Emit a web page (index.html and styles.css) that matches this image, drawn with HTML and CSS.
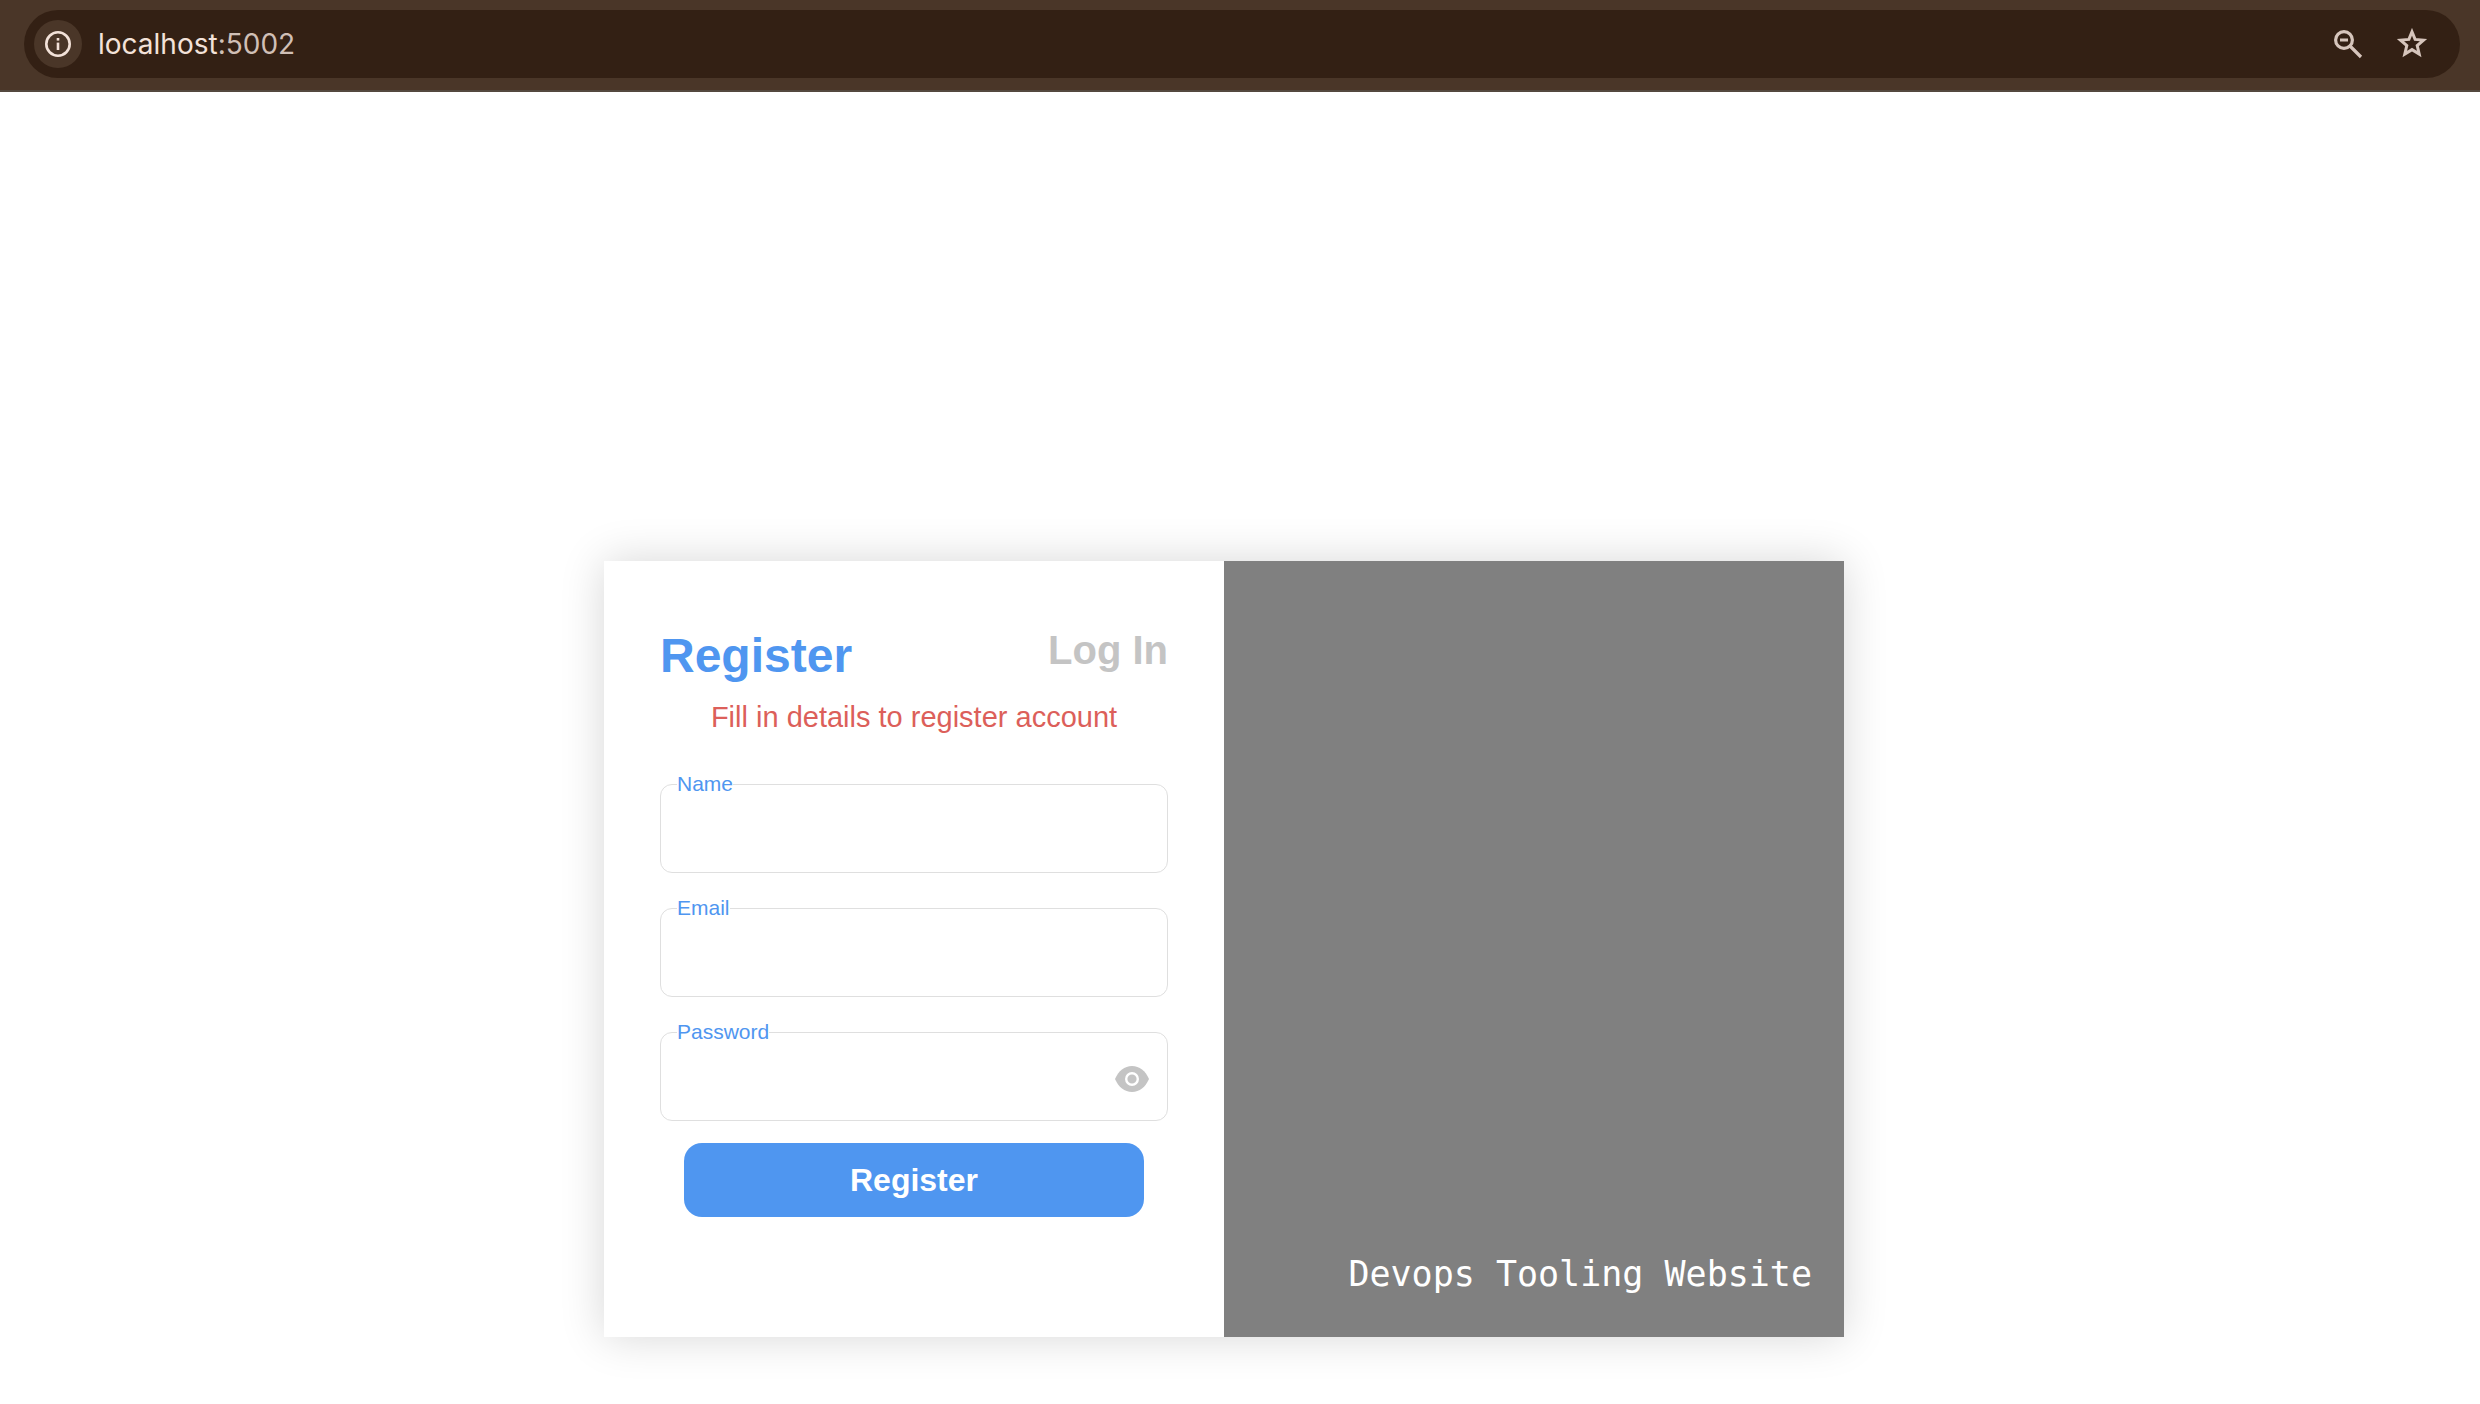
FILE: index.html
```html
<!DOCTYPE html>
<html lang="en">
<head>
  <meta charset="utf-8">
  <meta name="viewport" content="width=device-width, initial-scale=1">
  <title>Devops Tooling Website</title>
  <link rel="stylesheet" href="styles.css">
</head>
<body>
  <header class="toolbar">
    <div class="address">
      <button class="icon-button site-info" type="button" aria-label="Site information">
        <svg width="28" height="28" viewBox="0 0 28 28" fill="none" stroke="currentColor">
          <circle cx="14" cy="14" r="11.7" stroke-width="2.6"/>
          <path d="M14 12.6V20" stroke-width="2.6"/>
          <path d="M14 8V10.6" stroke-width="2.6"/>
        </svg>
      </button>
      <p class="url">localhost<span class="port">:5002</span></p>
      <div class="actions">
        <button class="icon-button" type="button" aria-label="Zoom out">
          <svg width="32" height="32" viewBox="0 0 32 32" fill="none" stroke="currentColor" stroke-width="3.2">
            <circle cx="12" cy="12" r="8.4"/>
            <path d="M18 18L29 29M8 12H16"/>
          </svg>
        </button>
        <button class="icon-button" type="button" aria-label="Bookmark this page">
          <svg width="32" height="32" viewBox="0 0 32 32" fill="none" stroke="currentColor" stroke-width="3">
            <path d="M16 3.800L19.100 11.400L27.500 12.100L21.200 17.600L23.200 26L16 21.600L8.800 26L10.800 17.600L4.500 12.100L12.900 11.400Z"/>
          </svg>
        </button>
      </div>
    </div>
  </header>

  <main class="page">
    <section class="card">
      <form class="register">
        <div class="tabs">
          <h1 class="title">Register</h1>
          <a class="login" href="#login">Log In</a>
        </div>
        <p class="message">Fill in details to register account</p>
        <div class="field">
          <input class="input" id="name" type="text">
          <label class="label" for="name">Name</label>
        </div>
        <div class="field">
          <input class="input" id="email" type="email">
          <label class="label" for="email">Email</label>
        </div>
        <div class="field">
          <input class="input" id="password" type="password">
          <label class="label" for="password">Password</label>
          <button class="reveal" type="button" aria-label="Show password">
            <svg width="36" height="28" viewBox="0 0 36 28">
              <path fill="#c4c4c4" d="M1 14C4.500 6 10.500 1 18 1S31.500 6 35 14C31.500 22 25.500 27 18 27S4.500 22 1 14Z"/>
              <circle cx="18" cy="14" r="5.800" fill="#c4c4c4" stroke="#fff" stroke-width="2.400"/>
            </svg>
          </button>
        </div>
        <button class="submit" type="submit">Register</button>
      </form>
      <aside class="banner">
        <p class="banner-text">Devops Tooling Website</p>
      </aside>
    </section>
  </main>
</body>
</html>
```

FILE: styles.css
```css
* {
  box-sizing: border-box;
}

body {
  display: flex;
  flex-direction: column;
  min-height: 100vh;
  margin: 0;
  background: #fff;
  font-family: "Liberation Sans", Arial, sans-serif;
}

h1,
p {
  margin: 0;
}

button {
  padding: 0;
  border: 0;
  background: none;
  font-family: inherit;
  cursor: pointer;
}

svg {
  display: block;
}

.toolbar {
  padding: 10px 20px 12px 24px;
  border-bottom: 2px solid #54483f;
  background: #4a3628;
}

.address {
  display: flex;
  align-items: center;
  gap: 16px;
  height: 68px;
  padding: 0 32px 0 10px;
  border-radius: 34px;
  background: #332014;
  color: #d6c5bc;
}

.icon-button {
  display: grid;
  place-items: center;
  width: 32px;
  height: 48px;
  color: inherit;
}

.site-info {
  width: 48px;
  border-radius: 50%;
  background: #4a3628;
  color: #f3e2d9;
}

.url {
  flex: 1;
  color: #f3e2d9;
  font-family: Inter, sans-serif;
  font-size: 28px;
  line-height: 36px;
}

.port {
  color: #d0bfb6;
}

.actions {
  display: flex;
  gap: 32px;
}

.page {
  flex: 1;
  display: flex;
  align-items: flex-end;
  justify-content: center;
  padding: 64px 32px 67px 0;
}

.card {
  display: grid;
  grid-template-columns: 1fr 1fr;
  width: 50vw;
  box-shadow: 0 0 42px rgba(0, 0, 0, 0.16);
}

.register {
  display: flex;
  flex-direction: column;
  padding: 63px 56px 120px;
  background: #fff;
}

.tabs {
  display: flex;
  align-items: flex-start;
  justify-content: space-between;
}

.title {
  padding-top: 4px;
  color: #4f96f0;
  font-size: 48px;
  line-height: 56px;
}

.login {
  color: #c4c4c4;
  font-size: 40px;
  font-weight: bold;
  line-height: 52px;
  text-decoration: none;
}

.message {
  margin: 15px 0 49px;
  color: #dc5f5a;
  font-size: 29px;
  line-height: 36px;
  text-align: center;
}

.field {
  position: relative;
  margin-bottom: 35px;
}

.input {
  display: block;
  width: 100%;
  height: 89px;
  padding: 0 20px;
  border: 1px solid #dfdfdf;
  border-radius: 12px;
  background: #fff;
  font-family: inherit;
  font-size: 29px;
}

/* Labels straddle the top border of the text box. */
.label {
  position: absolute;
  top: -12px;
  left: 17px;
  background: #fff;
  color: #4f96f0;
  font-size: 21px;
  line-height: 24px;
}

.reveal {
  position: absolute;
  top: 33px;
  right: 18px;
}

.submit {
  margin: -13px 24px 0;
  padding-top: 1px;
  border-radius: 18px;
  background: #4f96f0;
  color: #fff;
  font-size: 32px;
  font-weight: bold;
  line-height: 73px;
}

.banner {
  display: flex;
  align-items: flex-end;
  justify-content: flex-end;
  padding: 39px 32px;
  background: #808080;
}

.banner-text {
  color: #fff;
  font-family: "DejaVu Sans Mono", monospace;
  font-size: 35px;
  line-height: 48px;
}
```
